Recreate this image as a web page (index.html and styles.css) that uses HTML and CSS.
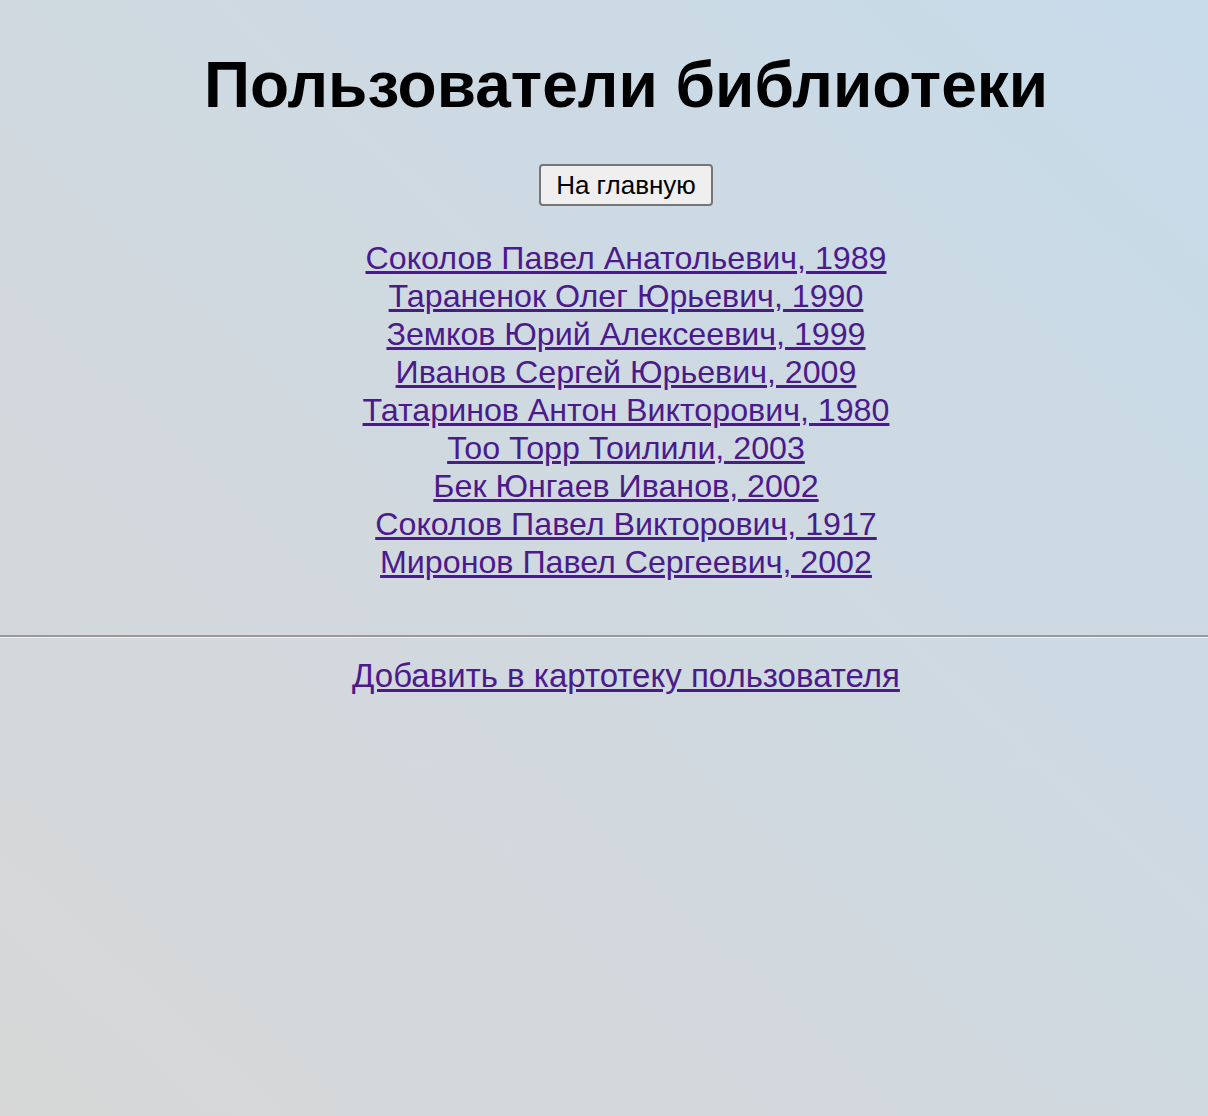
FILE: index.html
```html
<!DOCTYPE html>
<html lang="ru">
<head>
<meta charset="utf-8">
<title>Пользователи библиотеки</title>
<link rel="stylesheet" href="styles.css">
</head>
<body>
<div class="content">
  <h1 class="title">Пользователи библиотеки</h1>
  <div class="nav"><button class="btn">На главную</button></div>
  <ul class="users">
    <li><a href="#">Соколов Павел Анатольевич, 1989</a></li>
    <li><a href="#">Тараненок Олег Юрьевич, 1990</a></li>
    <li><a href="#">Земков Юрий Алексеевич, 1999</a></li>
    <li><a href="#">Иванов Сергей Юрьевич, 2009</a></li>
    <li><a href="#">Татаринов Антон Викторович, 1980</a></li>
    <li><a href="#">Тоо Торр Тоилили, 2003</a></li>
    <li><a href="#">Бек Юнгаев Иванов, 2002</a></li>
    <li><a href="#">Соколов Павел Викторович, 1917</a></li>
    <li><a href="#">Миронов Павел Сергеевич, 2002</a></li>
  </ul>
</div>
<hr class="rule">
<div class="content">
  <a class="add" href="#">Добавить в картотеку пользователя</a>
</div>
</body>
</html>
```
FILE: styles.css
```css
html {
  min-height: 100%;
  background: linear-gradient(to top right, #d7d7d7 0%, #d0d9e0 50%, #c7dbea 100%);
}
body {
  margin: 0;
  min-height: 1116px;
  font-family: "Liberation Sans", Arial, sans-serif;
}
.content {
  padding-left: 44px;
  text-align: center;
}
.title {
  margin: 0;
  padding-top: 48px;
  font-size: 64px;
  font-weight: bold;
  color: #000;
}
.nav {
  margin-top: 42px;
}
.btn {
  font-family: "Liberation Sans", Arial, sans-serif;
  font-size: 26px;
  line-height: 1;
  color: #000;
  background: #efefef;
  border: 2px solid #767676;
  border-radius: 4px;
  padding: 0 15px;
  height: 42px;
  white-space: nowrap;
  vertical-align: top;
}
.users {
  list-style: none;
  margin: 33px 0 0;
  padding: 0;
  font-size: 32.2px;
  line-height: 38px;
}
.users a, .add {
  color: #4b1a8b;
}
.rule {
  margin: 54px 0 0;
  border: none;
  border-top: 2px solid #9a9a9a;
  border-bottom: 1px solid #eeeeee;
  height: 0;
}
.add {
  display: inline-block;
  margin-top: 19px;
  font-size: 33px;
}
```
